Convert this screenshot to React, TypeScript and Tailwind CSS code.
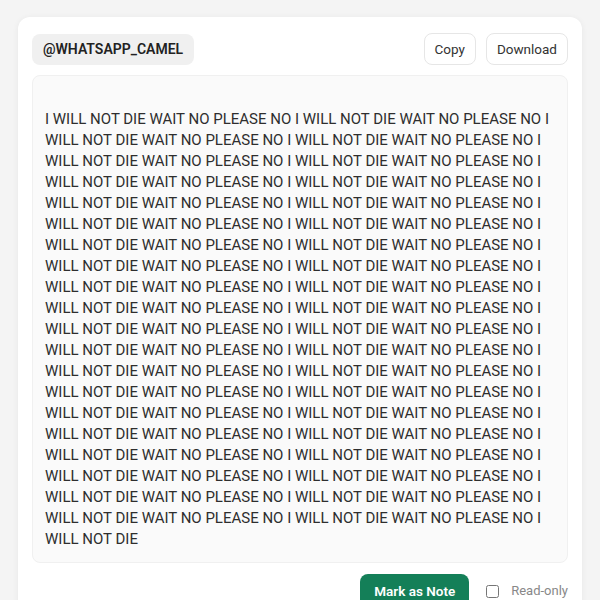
import { useState } from "react";

const TEXT = "\n" + "I WILL NOT DIE WAIT NO PLEASE NO ".repeat(40) + "I WILL NOT DIE";

const App = () => {
  const [readOnly, setReadOnly] = useState(false);

  return (
    <div
      className="min-h-screen bg-[#f4f4f4] px-[18px] pt-[17px]"
      style={{ fontFamily: "Roboto, 'Liberation Sans', sans-serif" }}
    >
      <div className="bg-white rounded-xl shadow-[0_1px_6px_rgba(0,0,0,0.06)] px-[14px] pt-4 pb-4">
        {/* header */}
        <div className="flex items-center justify-between">
          <div className="h-[31px] flex items-center px-[11px] rounded-lg bg-[#f0f0f0] text-[14px] font-semibold text-[#222]">
            @WHATSAPP_CAMEL
          </div>
          <div className="flex gap-[10px]">
            <button className="h-[32px] px-[10px] rounded-lg border border-[#e6e6e6] bg-white text-[13.5px] text-[#333]">
              Copy
            </button>
            <button className="h-[32px] px-[10px] rounded-lg border border-[#e6e6e6] bg-white text-[13.5px] text-[#333]">
              Download
            </button>
          </div>
        </div>

        {/* note body */}
        <div className="mt-[10px] rounded-lg border border-[#f0f0f0] bg-[#fafafa] px-[12px] pt-[12px] pb-[12px]">
          <p className="whitespace-pre-wrap text-[15px] leading-[21px] text-[#2e2e2e]">{TEXT}</p>
        </div>

        {/* footer */}
        <div className="mt-[11px] flex items-center justify-end gap-[17px]">
          <button className="h-[34px] px-[14px] rounded-lg bg-[#147f58] text-white text-[13.5px] font-semibold">
            Mark as Note
          </button>
          <label className="flex items-center gap-[12px] text-[13px] text-[#888]">
            <input
              type="checkbox"
              checked={readOnly}
              onChange={(e) => setReadOnly(e.target.checked)}
              className="w-[13px] h-[13px]"
            />
            Read-only
          </label>
        </div>
      </div>
    </div>
  );
};

export default App;
